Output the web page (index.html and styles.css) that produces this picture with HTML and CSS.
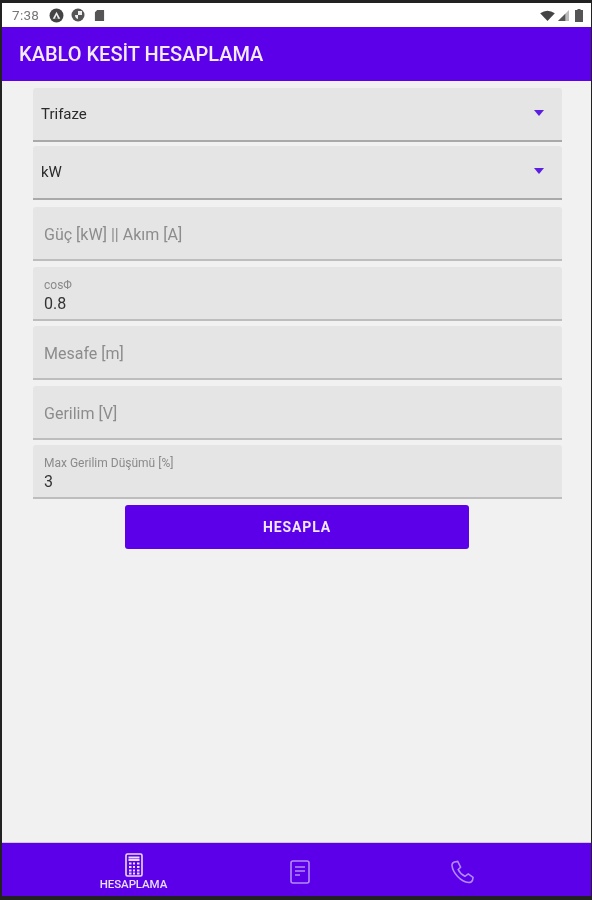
FILE: index.html
```html
<!DOCTYPE html>
<html lang="tr">
<head>
<meta charset="utf-8">
<title>Kablo Kesit Hesaplama</title>
<link rel="stylesheet" href="styles.css">
</head>
<body>
<div class="device">
  <div class="status">
    <span class="time">7:38</span>
    <svg class="si" viewBox="0 0 14 14"><circle cx="7" cy="7" r="6.500" fill="#444"/><path d="M7 3.500 10.500 10H3.500Z" fill="#eee"/><path d="M7 6.500 8.500 10h-3Z" fill="#444"/></svg>
    <svg class="si second" viewBox="0 0 14 14"><circle cx="7" cy="7" r="6.500" fill="#555"/><path d="M7 3h4v4H7Z M4 7h3v4a4 4 0 0 1-3-4Z" fill="#eee"/></svg>
    <svg class="si sd" viewBox="0 0 12 14"><path d="M3.500 1H11v12H1V3.500Z" fill="#555"/></svg>
    <span class="status-gap"></span>
    <svg class="wifi" viewBox="0 0 16 12"><path d="M0 3.500Q8-2 16 3.500L8 12Z" fill="#444"/></svg>
    <svg class="cell" viewBox="0 0 12 12"><path d="M12 0V12H0Z" fill="#bbb"/><path d="M8 4V12H0Z" fill="#555"/></svg>
    <svg class="batt" viewBox="0 0 8 13"><path d="M2.500 0h3v1H8v12H0V1h2.500Z" fill="#555"/></svg>
  </div>
  <header class="appbar">KABLO KESİT HESAPLAMA</header>
  <main class="content">
    <div class="field select first"><span>Trifaze</span><i class="caret"></i></div>
    <div class="field select"><span>kW</span><i class="caret"></i></div>
    <div class="field input gap7 hint">Güç [kW] || Akım [A]</div>
    <div class="field filled"><small>cosΦ</small><span>0.8</span></div>
    <div class="field input hint">Mesafe [m]</div>
    <div class="field input hint">Gerilim [V]</div>
    <div class="field filled"><small>Max Gerilim Düşümü [%]</small><span>3</span></div>
    <button class="calc" type="button">HESAPLA</button>
  </main>
  <nav class="bottom">
    <div class="tab active">
      <svg class="ticon" viewBox="0 0 18 24" fill="none" stroke="#eadcff" stroke-width="1.600"><rect x="1" y="1" width="16" height="22" rx="1.500"/><path d="M3.500 4.500h11M3.500 7h11" stroke-width="2"/><path d="M4 10.500h2.500M8 10.500h2M12 10.500h2.500M4 14h2.500M8 14h2M12 14h2.500M4 17.500h2.500M8 17.500h2M12 17.500h2.500M4 20.500h2.500M8 20.500h2M12 20.500h2.500" stroke-width="2"/></svg>
      <span>HESAPLAMA</span>
    </div>
    <div class="tab">
      <svg class="ticon doc" viewBox="0 0 20 24" fill="none" stroke="#b28cff" stroke-width="1.600"><rect x="1" y="1" width="18" height="22" rx="2"/><path d="M5 7h10M5 11h10M5 15h5"/></svg>
    </div>
    <div class="tab">
      <svg class="ticon phone" viewBox="0 0 24 24" fill="none" stroke="#b28cff" stroke-width="1.600"><path d="M3.500 1.500 7 1l3 6-2.500 2.500q2.500 5 7 7L18 14l5 3.500-.5 3q-1 2.500-4 2.500C10 22 2 13 1 5q0-2.500 2.500-3.500Z"/></svg>
    </div>
  </nav>
</div>
</body>
</html>
```
FILE: styles.css
```css
* { box-sizing: border-box; }
html, body { margin: 0; padding: 0; overflow: hidden; }
body { background: #1c1c1c; font-family: Roboto, "Liberation Sans", sans-serif; }
.device {
  width: 592px; height: 900px;
  display: flex; flex-direction: column;
  padding: 3px 1px 4px 2px;
  background: #222;
  filter: blur(.7px);
}
.status {
  height: 24px; background: #fff; flex: none;
  display: flex; align-items: center;
  padding: 0 8px 0 10px;
}
.time { font-size: 13.500px; color: #777; margin-right: 10px; letter-spacing: .3px; }
.si { width: 15px; height: 15px; }
.si.second { margin: 0 9px 0 7px; width: 14px; height: 14px; }
.si.sd { width: 11px; height: 13px; }
.status-gap { flex: 1; }
.wifi { width: 15px; height: 11px; margin-right: 3px; }
.cell { width: 11px; height: 11px; margin-right: 6px; }
.batt { width: 8px; height: 13px; }
.appbar {
  height: 54px; flex: none; background: #5c00ea;
  color: #f3eaff; font-size: 20px; font-weight: 500;
  display: flex; align-items: center; padding-left: 17px;
}
.content {
  flex: 1; background: #f1f1f1;
  display: flex; flex-direction: column; align-items: center;
  padding-top: 7px;
}
.field {
  width: 529px; margin-left: 2px; height: 54px; flex: none;
  background: #e5e5e5; border-bottom: 2px solid #bdbdbd;
  border-radius: 3px 3px 0 0;
  margin-top: 5.500px; color: #2a2a2a;
  display: flex;
}
.select { align-items: center; justify-content: space-between; padding: 0 18px 0 8px; font-size: 15px; margin-top: 4px; border-bottom-color: #a9a9a9; }
.select.first { margin-top: 0; }
.field.gap7 { margin-top: 7px; }
.input { align-items: center; padding: 3px 11px 0; }
.hint { color: #8c8c8c; font-size: 16px; }
.filled { flex-direction: column; padding: 13px 11px 0; font-size: 16px; color: #333; }
.filled small { font-size: 12px; line-height: 11px; color: #8a8a8a; }
.filled span { line-height: 20px; margin-top: 3px; }
.caret { width: 0; height: 0; border: 5px solid transparent; border-top: 6px solid #5c1ee0; border-bottom: 0; margin-bottom: 3px; }
.calc {
  width: 344px; height: 44px; margin: 6px 0 0 1px; border: 0; border-radius: 3px;
  background: #5c00ea; color: #f0e6ff;
  font: 700 14px Roboto, "Liberation Sans", sans-serif; letter-spacing: .9px;
}
.bottom {
  height: 53px; flex: none; background: #5c00ea;
  display: grid; grid-template-columns: 165px 165px 165px;
  padding-left: 49px;
  box-shadow: 0 -1px 0 #cfc6ea;
}
.tab { display: flex; flex-direction: column; align-items: center; justify-content: center; padding-top: 3px; }
.tab span { font-size: 11.500px; line-height: 12px; color: #e8dcff; letter-spacing: -.1px; margin-top: 1px; font-weight: 500; }
.active .ticon { width: 18px; height: 24px; }
.doc { width: 20px; height: 24px; margin: 2px 0 0 2px; }
.phone { width: 23px; height: 24px; margin: 2px 0 0 -2px; }
```
